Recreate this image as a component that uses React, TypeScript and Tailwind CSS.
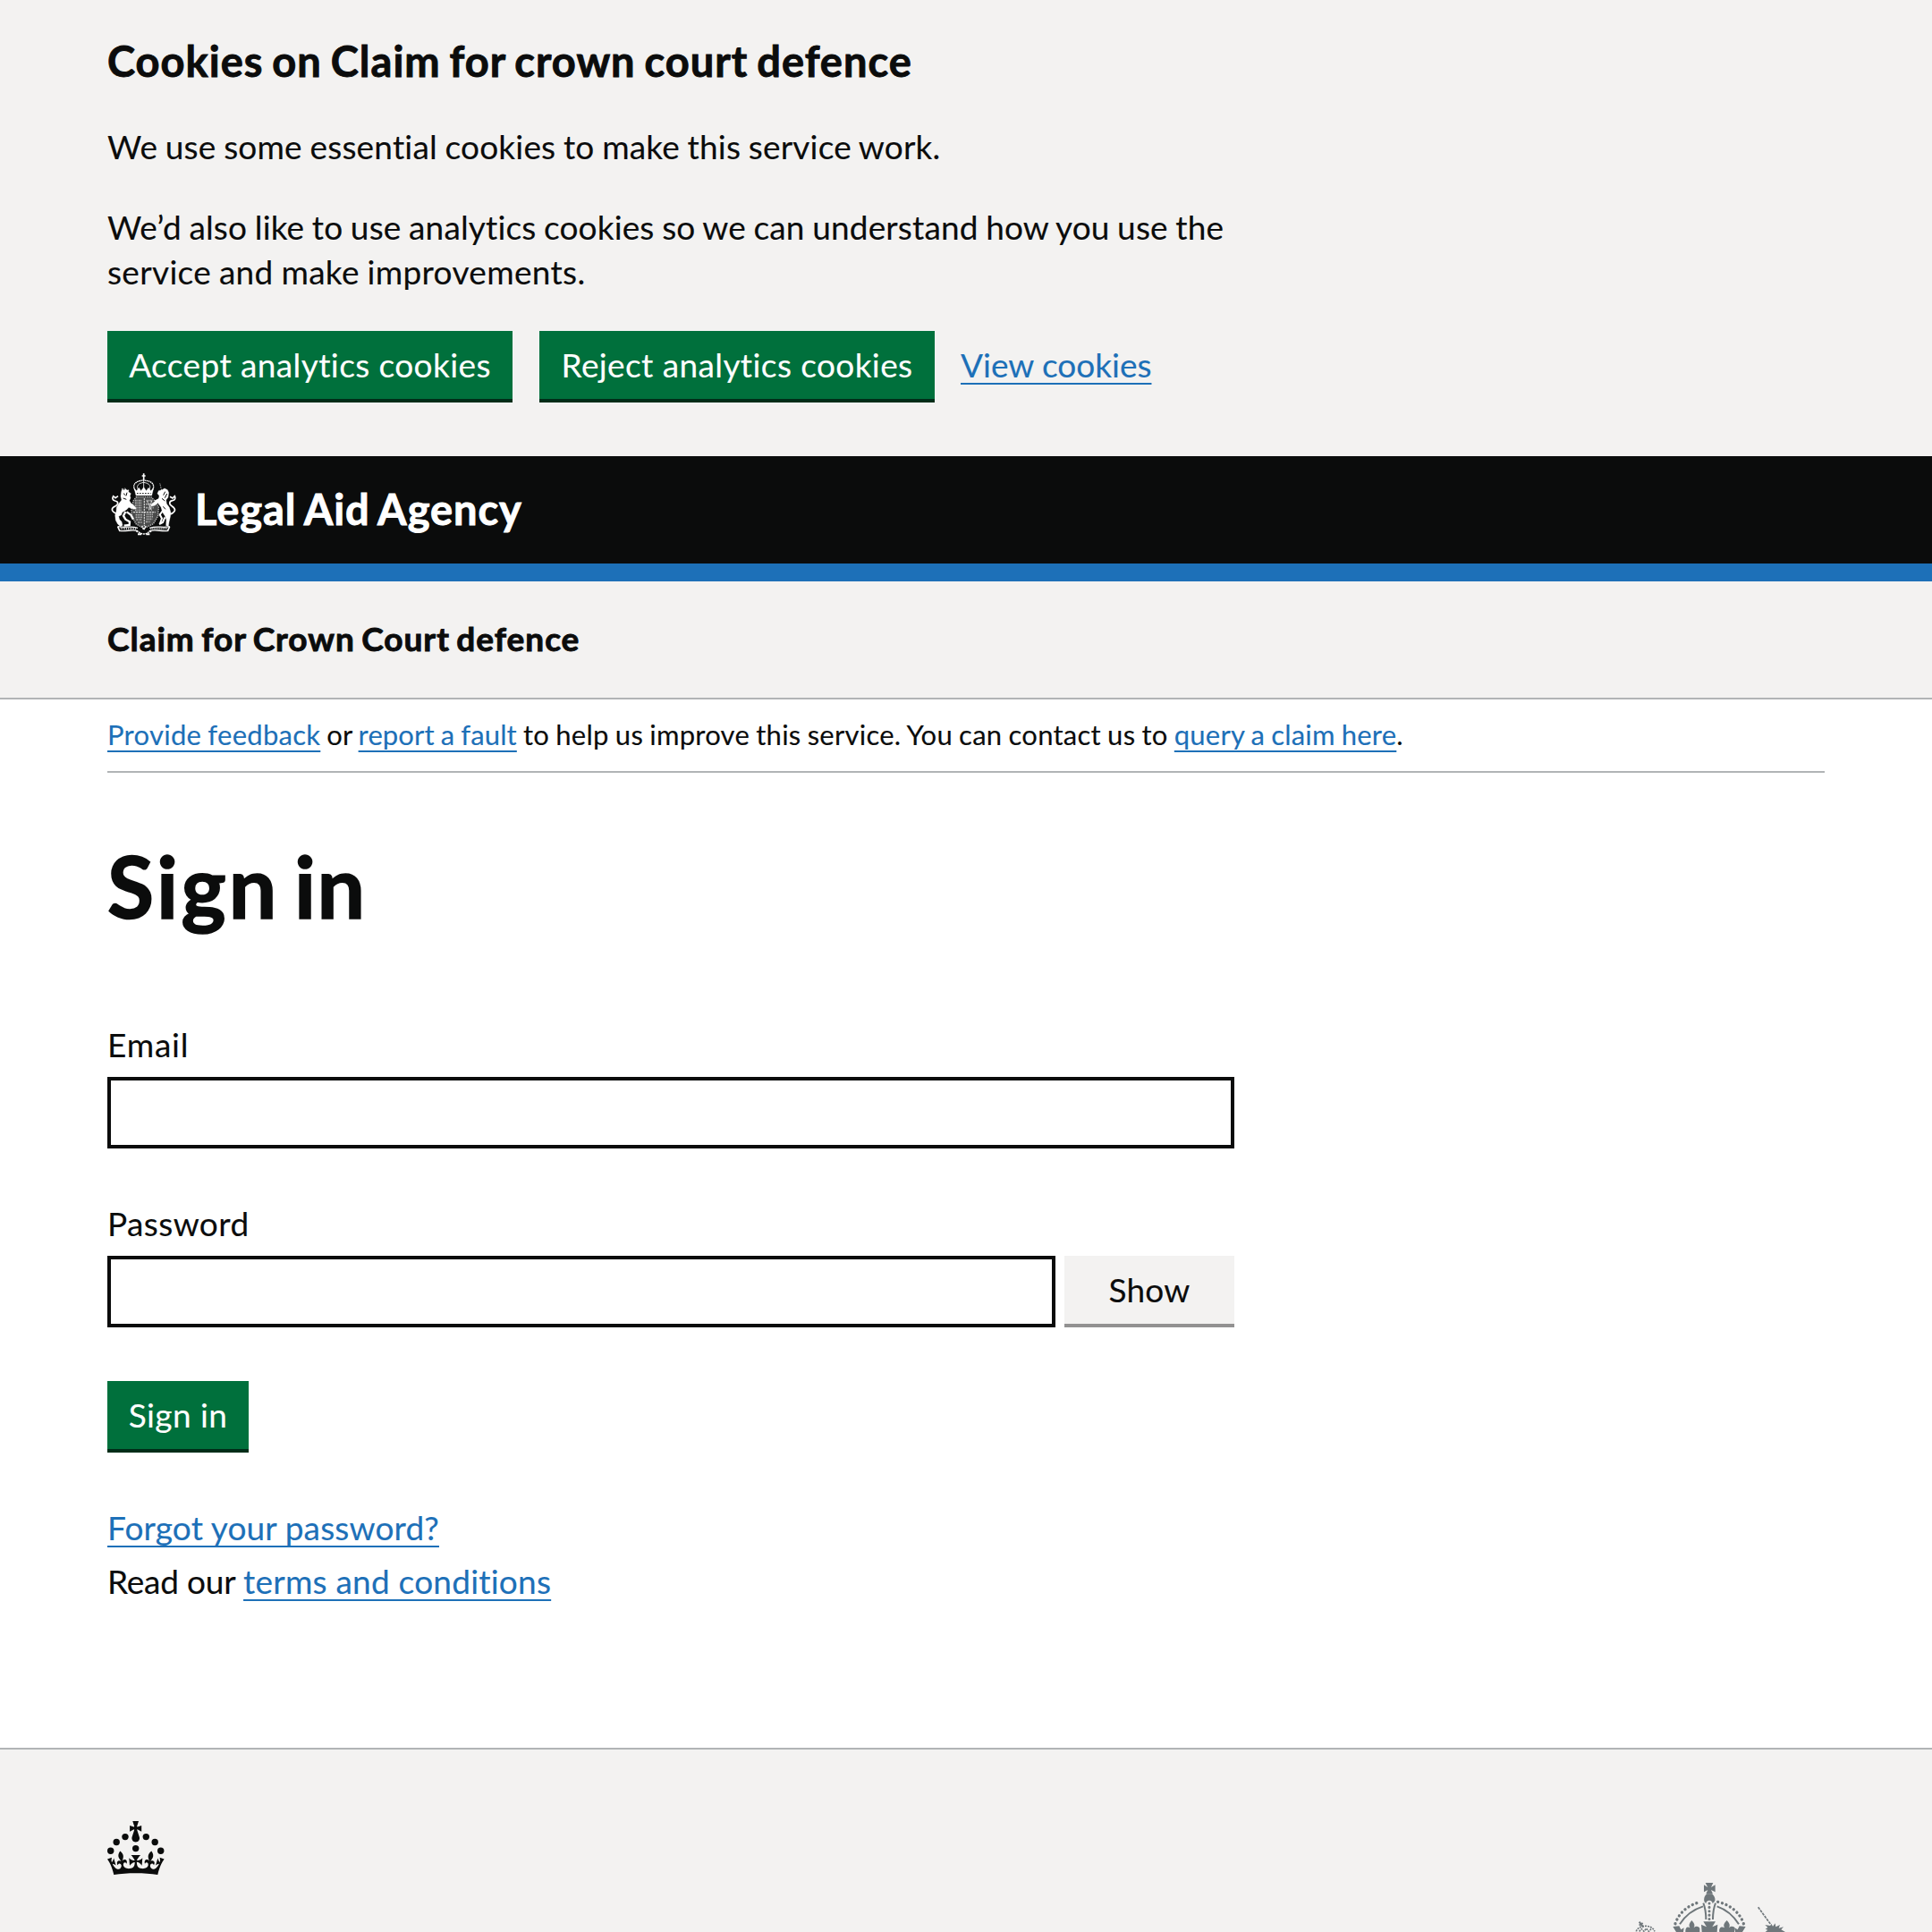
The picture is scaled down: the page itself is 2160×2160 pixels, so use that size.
import type { ReactNode } from "react";

function Link({ children, className = "" }: { children: ReactNode; className?: string }) {
  return (
    <a
      href="#"
      className={`text-[#1d70b8] underline decoration-2 underline-offset-[6px] [text-decoration-skip-ink:none] ${className}`}
    >
      {children}
    </a>
  );
}

function GreenButton({ children, className = "" }: { children: ReactNode; className?: string }) {
  return (
    <button
      type="button"
      className={`flex h-20 items-center justify-center whitespace-nowrap border-b-4 border-[#002d18] bg-[#00703c] text-white ${className}`}
    >
      {children}
    </button>
  );
}

function HeaderCrest() {
  return (
    <svg viewBox="40 42 225 210" className="mb-[13px] h-[70px] w-[75px]" fill="none" stroke="#fff" aria-hidden="true">
      {/* crown */}
      <path d="M153 43v24M147 51h12" strokeWidth="5" />
      <path d="M128 104c-16-18-8-36 25-38c33 2 41 20 25 38" strokeWidth="4" strokeDasharray="5 1.5" />
      <path d="M135 98c-8-13-1-22 18-25c19 3 26 12 18 25M153 67v30" strokeWidth="2.5" />
      <path d="M121 92l8 9l8-10l7 10l9-12l9 12l7-10l8 10l9-9l-6 25h-53z" fill="#fff" strokeWidth="1" />
      <path d="M130 110h47" stroke="#0b0c0c" strokeWidth="3" strokeDasharray="5 4" />
      {/* shield */}
      <path d="M128 122h50l14 14l11 20l-2 30l-16 26l-32 16l-26-16l-14-26l-2-30l8-22z" fill="#4a4b4b" stroke="#b8b8b8" strokeWidth="4" strokeDasharray="4 3" />
      <path
        d="M124 134h24M124 142h24M124 150h24M124 158h24M124 166h24M162 134h20M160 146h26M160 158h26M126 182h22M126 190h22M128 198h20M134 207h14M162 180h22M162 188h22M162 196h20M160 205h14"
        stroke="#b0b0b0"
        strokeWidth="5"
        strokeDasharray="5 2 3 2"
      />
      <path d="M155 126v94M118 173h74M164 134l16 34M180 134l-10 34" stroke="#d8d8d8" strokeWidth="3.5" strokeDasharray="7 2" />
      {/* lion */}
      <path
        d="M78 104l3-8l7 4l3-6l6 5l6-1l-1 7l8 5l-3 8l2 7l-4 9l6 10l11 8l6 9l-8 2l-17-6l-8 8l-14 8l-3 9l-9 5l3 10l7 8l3 12l-7 4l-9-8l-7-13l-2-17l4-13l1-14l8-13l9-11l-3-12z"
        fill="#fff"
        strokeWidth="1"
      />
      <path d="M85 110l7 6M97 107l-3 11M84 126l11 4" stroke="#0b0c0c" strokeWidth="3" />
      <path d="M92 171l-7 14l7 12l14 8l-1 11l-18 2M96 172l14 10l8 15M98 138l20 16" strokeWidth="7" />
      <path d="M62 178c-18-8-20-18-5-25c13-7 11-16 0-18c-10-3-10-10-6-16l7 6l9-6" strokeWidth="5" />
      <path d="M80 101l1-9l6 5l4-7" strokeWidth="2" strokeDasharray="3 2" />
      {/* unicorn */}
      <path
        d="M214 98l9-5l10 5l4 9l-2 16l-7 9l2 13l9 12l5 18l-2 14l-4 17l-2 14l-8-2l1-20l-5-13l-8-12l-5-17l-11-14l-9 8l-14 4l3-9l13-10l10-5l2-12l-6-8l4-9z"
        fill="#fff"
        strokeWidth="1"
      />
      <path d="M213 100l-6-25" strokeWidth="2" strokeDasharray="5 3" />
      <path d="M225 104l-6 12M231 111l-7 14M214 127l10 8M218 154l8 9" stroke="#0b0c0c" strokeWidth="3" />
      <path d="M217 168l-10 13l7 13l-6 16M224 190l-7 17l-12 6M190 137l16-8" strokeWidth="6" />
      <path d="M242 180c19-9 20-18 6-27c-12-8-9-17 1-19c9-2 12-8 8-15l-7 7l-9-5" strokeWidth="5" />
      {/* scroll */}
      <path d="M66 221c30 6 42-4 67 5M173 226c25-9 42 1 67-5M71 235c25 4 41-6 63 1M171 236c24-7 41 3 64-1" strokeWidth="4" />
      <path d="M76 228h54M176 228h56" stroke="#c8c8c8" strokeWidth="8" strokeDasharray="3 3" />
      <path d="M66 221l7 16M240 221l-7 16" strokeWidth="5" />
      <path d="M147 218l6 14l8-14M128 238c12 0 12 8 25 8s13-8 26-8" strokeWidth="4" strokeDasharray="6 2" />
      <path d="M133 247h12M161 247h12" strokeWidth="6" />
    </svg>
  );
}

function Crown() {
  return (
    <svg viewBox="0 0 64 60" className="h-[60px] w-16" fill="#0b0c0c" aria-hidden="true">
      <circle cx="20" cy="17.6" r="3.7" />
      <circle cx="10.2" cy="23.5" r="3.7" />
      <circle cx="3.7" cy="33.2" r="3.7" />
      <circle cx="31.7" cy="30.6" r="3.7" />
      <circle cx="43.3" cy="17.6" r="3.7" />
      <circle cx="53.2" cy="23.5" r="3.7" />
      <circle cx="59.7" cy="33.2" r="3.7" />
      <path d="M33.1,9.8c.2-.1.3-.3.5-.5l4.6,2.4v-6.8l-4.6,1.5c-.1-.2-.3-.3-.5-.5l1.9-5.9h-6.7l1.9,5.9c-.2.1-.3.3-.5.5l-4.6-1.5v6.8l4.6-2.4c.1.2.3.3.5.5l-2.6,8c-.9,2.8,1.2,5.7,4.1,5.7h0c3,0,5.1-2.9,4.1-5.7l-2.6-8ZM37,37.9s-3.4,3.8-4.1,6.1c2.2,0,4.2-.5,6.4-2.8l-.7,8.5c-2-2.8-4.4-4.1-5.7-3.8.1,3.1.5,6.7,5.8,7.2,3.7.3,6.7-1.5,7-3.8.4-2.6-2-4.3-3.7-1.6-1.4-4.5,2.4-6.1,4.9-3.2-1.9-4.5-1.8-7.7,2.4-10.9,3,4,2.6,7.3-1.2,11.1,2.4-1.3,6.2,0,4,4.6-1.2-2.8-3.7-2.2-4.2.2-.3,1.7.7,3.7,3,4.2,1.9.3,4.7-.9,7-5.9-1.3,0-2.4.7-3.9,1.7l2.4-8c.6,2.3,1.4,3.7,2.2,4.5.6-1.6.5-2.8,0-5.3l5,1.8c-2.6,3.6-5.2,8.7-7.3,17.5-7.4-1.1-15.7-1.7-24.5-1.7h0c-8.8,0-17.1.6-24.5,1.7-2.1-8.9-4.7-13.9-7.3-17.5l5-1.8c-.5,2.5-.6,3.7,0,5.3.8-.8,1.6-2.3,2.2-4.5l2.4,8c-1.5-1-2.6-1.7-3.9-1.7,2.3,5,5.2,6.2,7,5.9,2.3-.4,3.3-2.4,3-4.2-.5-2.4-3-3.1-4.2-.2-2.2-4.6,1.6-6,4-4.6-3.7-3.7-4.2-7.1-1.2-11.1,4.2,3.2,4.3,6.4,2.4,10.9,2.5-2.8,6.3-1.3,4.9,3.2-1.8-2.7-4.1-1-3.7,1.6.3,2.3,3.3,4.1,7,3.8,5.4-.5,5.7-4.2,5.8-7.2-1.3-.2-3.7,1-5.7,3.8l-.7-8.5c2.2,2.3,4.2,2.7,6.4,2.8-.7-2.3-4.1-6.1-4.1-6.1h10.6Z" />
    </svg>
  );
}

/* Top of the coat of arms; the remainder runs below the fold. */
function FooterCrest() {
  return (
    <svg viewBox="0 72 720 168" className="h-[56px] w-[240px]" fill="#6f777b" stroke="#6f777b" aria-hidden="true">
      <g stroke="none">
        <path d="M350 75h26l-7 15l14-8v24l-14-7l6 13h-23l6-13l-13 7v-24l13 8z" />
        <path d="M355 112h17c8 6 12 15 10 24l-8 9c0-14-22-14-22 0l-6-8c-2-10 1-19 9-25z" />
        <path d="M343 205h41l-11 18l18-8l-2 25h-51l-2-25l18 8z" />
        <path d="M304 201c9 9 12 17 7 25c9-8 18-4 20 2v12h-48c-1-14 6-20 15-14c-5-8-2-16 6-25z" />
        <path d="M422 201c9 9 12 17 7 25c9-8 18-4 20 1l-2 13h-50c-3-14 7-20 17-14c-5-8-2-16 8-25z" />
        <path d="M241 222l21-2l6 12l10-6l-2 14h-24zM485 222l-21-2l-6 12l-10-6l2 14h24z" />
        <path d="M550 216l18 3l4-5l4 7l8-10l2 12l14-7l-4 11l16-4l-8 9l14 8h-67l8-7l-8-3l8-5z" />
      </g>
      <g fill="none">
        <path d="M264 214c16-26 40-48 78-60M462 214c-16-26-38-48-73-60" strokeWidth="6" />
        <path d="M249 212c12-36 42-62 82-72M478 212c-12-36-42-62-86-73" strokeWidth="10" strokeLinecap="round" strokeDasharray="0.1 14.6" />
        <path d="M343 143c7 18 9 36 9 55M384 143c-7 18-9 36-9 55" strokeWidth="6" />
        <path d="M363 144v54" strokeWidth="9" strokeLinecap="round" strokeDasharray="0.1 13" />
        <path d="M527 157l44 60" strokeWidth="5" strokeDasharray="9 3" />
        <path d="M128 206l14 18M128 218l12-8" strokeWidth="6" />
        <path d="M118 238c5-20 50-28 62 0M128 238l8-8l8 8l8-10l8 10l8-8" strokeWidth="5" strokeDasharray="6 3" />
      </g>
    </svg>
  );
}

const boldText = "font-bold [word-spacing:-2.5px] [-webkit-text-stroke:0.9px_currentColor]";

export default function App() {
  return (
    <div className="flex h-[2160px] w-[2160px] flex-col overflow-hidden bg-white font-['Lato',sans-serif] text-[37px] leading-[50px] text-[#0b0c0c] [font-variant-ligatures:none] [-webkit-text-stroke:0.12px_currentColor]">
      <section className="h-[510px] shrink-0 bg-[#f3f2f1] px-[120px] pt-[38px]">
        <h2 className={`mb-[41px] text-[47px] leading-[60px] tracking-[1px] ${boldText}`}>
          Cookies on Claim for crown court defence
        </h2>
        <p className="mb-10 tracking-[0.18px] [word-spacing:-1px]">We use some essential cookies to make this service work.</p>
        <p className="mb-[41px] tracking-[0.14px] [word-spacing:-1px]">
          We’d also like to use analytics cookies so we can understand how you use the
          <br />
          <span className="tracking-[0.32px]">service and make improvements.</span>
        </p>
        <div className="flex items-center">
          <GreenButton className="w-[453px] tracking-[0.4px]">Accept analytics cookies</GreenButton>
          <GreenButton className="ml-[30px] w-[442px] tracking-[0.4px]">Reject analytics cookies</GreenButton>
          <Link className="mb-1 ml-[29px] tracking-[-0.01px]">View cookies</Link>
        </div>
      </section>

      <header className="flex h-[140px] shrink-0 items-center border-b-[20px] border-[#1d70b8] bg-[#0b0c0c] px-[123px] text-white">
        <HeaderCrest />
        <span className={`mb-[3px] ml-[20px] text-[47px] tracking-[0.95px] ${boldText}`}>Legal Aid Agency</span>
      </header>

      <nav className="flex h-[132px] shrink-0 items-center border-b-2 border-[#b1b4b6] bg-[#f3f2f1] px-[120px]">
        <span className={`mb-[3px] tracking-[0.98px] ${boldText}`}>Claim for Crown Court defence</span>
      </nav>

      <main className="mx-[120px] flex flex-1 flex-col">
        <p className="flex h-[82px] items-center whitespace-pre border-b-2 border-[#b1b4b6] pb-[2px] text-[31px] tracking-[0.25px] [word-spacing:-1px]">
          <Link className="tracking-[0.27px]">Provide feedback</Link>
          <span className="tracking-[0.05px]"> or </span>
          <Link className="tracking-[0.12px]">report a fault</Link> to help us improve this service. You can contact us to{" "}
          <Link className="tracking-[0.2px]">query a claim here</Link>.
        </p>

        <h1 className="mt-[76px] text-[95px] font-bold leading-[100px] tracking-[3.2px] [-webkit-text-stroke:1.6px_currentColor] [word-spacing:-10px]">
          Sign <span className="tracking-[1.5px]">in</span>
        </h1>

        <form className="mt-[103px] w-[1260px]">
          <label className="block tracking-[0.8px]" htmlFor="email">Email</label>
          <input id="email" type="email" className="mt-[11px] block h-20 w-full border-4 border-[#0b0c0c] bg-white" />

          <label className="mt-[59px] block tracking-[0.4px]" htmlFor="password">Password</label>
          <div className="mt-[11px] flex gap-[10px]">
            <input id="password" type="password" className="h-20 min-w-0 flex-1 border-4 border-[#0b0c0c] bg-white" />
            <button type="button" className="h-20 w-[190px] border-b-4 border-[#929191] bg-[#f3f2f1] tracking-[0.2px]">
              Show
            </button>
          </div>

          <GreenButton className="mt-[60px] w-[158px] tracking-[0.4px]">Sign in</GreenButton>
        </form>

        <p className="mt-[59px]">
          <Link className="tracking-[0.14px]">Forgot your password?</Link>
        </p>
        <p className="mt-[10px]">
          <span className="tracking-[-0.2px]">Read our </span>
          <Link className="tracking-[0.22px]">terms and conditions</Link>
        </p>
      </main>

      <footer className="flex h-[206px] shrink-0 items-start justify-between border-t-2 border-[#b1b4b6] bg-[#f3f2f1] pl-[120px] pr-[130px] pt-20">
        <Crown />
        <div className="pt-[68px]">
          <FooterCrest />
        </div>
      </footer>
    </div>
  );
}
